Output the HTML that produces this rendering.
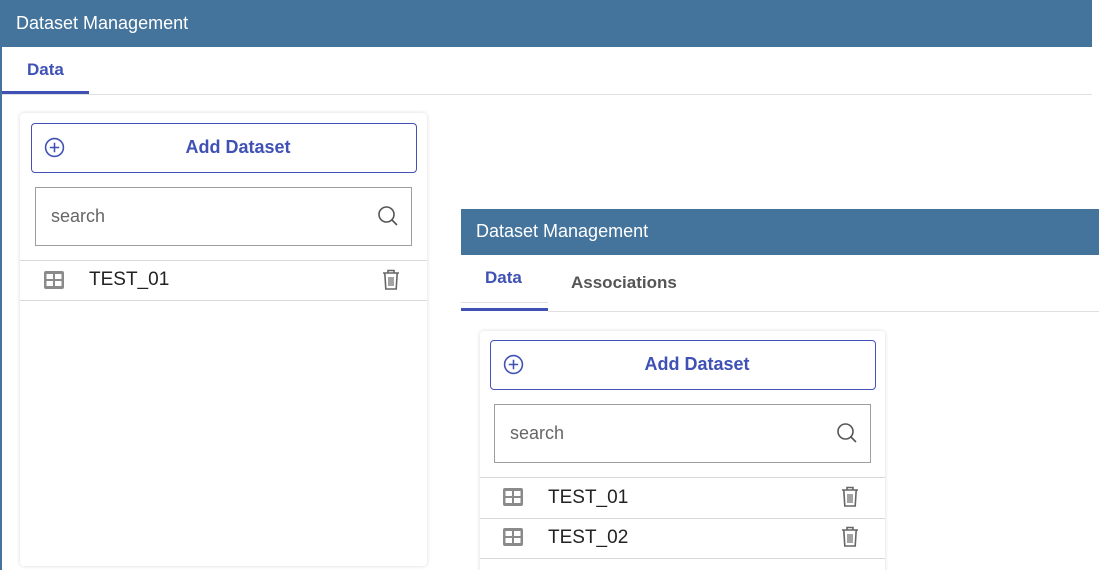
<!DOCTYPE html>
<html><head><meta charset="utf-8"><style>
*{box-sizing:border-box;margin:0;padding:0}
html,body{width:1099px;height:570px;overflow:hidden}
body{background:#fff;font-family:"Liberation Sans",sans-serif;position:relative}
.abs{position:absolute}
.hdr{background:#44749c;color:#fff;font-size:18px;line-height:46px;padding-left:16px}
.tab{color:#3f51b5;font-weight:bold;font-size:17px}
.card{background:#fff;box-shadow:0 0 4px rgba(0,0,0,.15);border-radius:4px}
.btn{border:1.5px solid #4452b8;border-radius:4px;color:#3f51b5;font-weight:bold;font-size:18px;text-align:center;padding-left:28px}
.search{border:1px solid #9e9e9e;color:#666;font-size:18px}
.line{height:1px;background:#d9d9d9}
.txt{font-size:19px;color:#222}
</style></head><body>
<div class="abs" style="left:0;top:0;width:2px;height:570px;background:#44749c"></div>
<div class="abs hdr" style="left:0;top:0;width:1092px;height:47px">Dataset Management</div>
<div class="abs tab" style="left:27px;top:60px">Data</div>
<div class="abs" style="left:2px;top:94px;width:1090px;height:1px;background:#e0e0e0"></div>
<div class="abs" style="left:2px;top:91px;width:87px;height:3px;background:#3f51b5"></div>

<div class="abs card" style="left:20px;top:113px;width:407px;height:453px"></div>
<div class="abs btn" style="left:31px;top:123px;width:386px;height:50px;line-height:47px">Add Dataset</div>
<svg class="abs" style="left:44px;top:137px" width="21" height="21" viewBox="0 0 20 20"><circle cx="10" cy="10" r="8.5" fill="none" stroke="#3f51b5" stroke-width="1.5"/><path d="M10 5.5v9M5.5 10h9" stroke="#3f51b5" stroke-width="1.5"/></svg>
<div class="abs search" style="left:35px;top:187px;width:377px;height:59px;line-height:57px;padding-left:15px">search</div>
<svg class="abs" style="left:377px;top:205px" width="22" height="22" viewBox="0 0 22 22"><circle cx="9.5" cy="9.5" r="7.5" fill="none" stroke="#555" stroke-width="1.6"/><path d="M15 15l5 5" stroke="#555" stroke-width="1.6"/></svg>
<div class="abs line" style="left:20px;top:260px;width:407px"></div>
<div class="abs line" style="left:20px;top:300px;width:407px"></div>
<svg class="abs" style="left:44px;top:271px" width="20" height="18" viewBox="0 0 20 18"><rect x="0" y="0" width="20" height="18" rx="2" fill="#8a8a8a"/><rect x="2.5" y="3" width="6.5" height="5" fill="#fff"/><rect x="11" y="3" width="6.5" height="5" fill="#fff"/><rect x="2.5" y="10" width="6.5" height="5" fill="#fff"/><rect x="11" y="10" width="6.5" height="5" fill="#fff"/></svg>
<div class="abs txt" style="left:89px;top:269px">TEST_01</div>
<svg class="abs" style="left:381px;top:269px" width="20" height="22" viewBox="0 0 20 22"><path d="M2 4h16M7 4V1.5h6V4M3.8 4l1 16h10.4l1-16" fill="none" stroke="#666" stroke-width="1.6"/><path d="M8 8v9M10 8v9M12 8v9" stroke="#666" stroke-width="1.2"/></svg>

<div class="abs" style="left:461px;top:209px;width:638px;height:361px;background:#fff"></div>
<div class="abs hdr" style="left:461px;top:209px;width:638px;height:46px;line-height:44px;padding-left:15px;font-size:18px">Dataset Management</div>
<div class="abs tab" style="left:485px;top:268px">Data</div>
<div class="abs" style="left:571px;top:273px;font-size:17px;font-weight:bold;color:#555">Associations</div>
<div class="abs" style="left:461px;top:302px;width:87px;height:1px;background:#e0e0e0"></div>
<div class="abs" style="left:548px;top:311px;width:551px;height:1px;background:#e0e0e0"></div>
<div class="abs" style="left:461px;top:308px;width:87px;height:3px;background:#3f51b5"></div>

<div class="abs card" style="left:480px;top:331px;width:405px;height:260px"></div>
<div class="abs btn" style="left:490px;top:340px;width:386px;height:50px;line-height:47px">Add Dataset</div>
<svg class="abs" style="left:503px;top:354px" width="21" height="21" viewBox="0 0 20 20"><circle cx="10" cy="10" r="8.5" fill="none" stroke="#3f51b5" stroke-width="1.5"/><path d="M10 5.5v9M5.5 10h9" stroke="#3f51b5" stroke-width="1.5"/></svg>
<div class="abs search" style="left:494px;top:404px;width:377px;height:59px;line-height:57px;padding-left:15px">search</div>
<svg class="abs" style="left:836px;top:422px" width="22" height="22" viewBox="0 0 22 22"><circle cx="9.5" cy="9.5" r="7.5" fill="none" stroke="#555" stroke-width="1.6"/><path d="M15 15l5 5" stroke="#555" stroke-width="1.6"/></svg>
<div class="abs line" style="left:480px;top:477px;width:405px"></div>
<div class="abs line" style="left:480px;top:518px;width:405px"></div>
<div class="abs line" style="left:480px;top:558px;width:405px"></div>
<svg class="abs" style="left:503px;top:488px" width="20" height="18" viewBox="0 0 20 18"><rect x="0" y="0" width="20" height="18" rx="2" fill="#8a8a8a"/><rect x="2.5" y="3" width="6.5" height="5" fill="#fff"/><rect x="11" y="3" width="6.5" height="5" fill="#fff"/><rect x="2.5" y="10" width="6.5" height="5" fill="#fff"/><rect x="11" y="10" width="6.5" height="5" fill="#fff"/></svg>
<div class="abs txt" style="left:548px;top:487px">TEST_01</div>
<svg class="abs" style="left:840px;top:486px" width="20" height="22" viewBox="0 0 20 22"><path d="M2 4h16M7 4V1.5h6V4M3.8 4l1 16h10.4l1-16" fill="none" stroke="#666" stroke-width="1.6"/><path d="M8 8v9M10 8v9M12 8v9" stroke="#666" stroke-width="1.2"/></svg>
<svg class="abs" style="left:503px;top:528px" width="20" height="18" viewBox="0 0 20 18"><rect x="0" y="0" width="20" height="18" rx="2" fill="#8a8a8a"/><rect x="2.5" y="3" width="6.5" height="5" fill="#fff"/><rect x="11" y="3" width="6.5" height="5" fill="#fff"/><rect x="2.5" y="10" width="6.5" height="5" fill="#fff"/><rect x="11" y="10" width="6.5" height="5" fill="#fff"/></svg>
<div class="abs txt" style="left:548px;top:527px">TEST_02</div>
<svg class="abs" style="left:840px;top:526px" width="20" height="22" viewBox="0 0 20 22"><path d="M2 4h16M7 4V1.5h6V4M3.8 4l1 16h10.4l1-16" fill="none" stroke="#666" stroke-width="1.6"/><path d="M8 8v9M10 8v9M12 8v9" stroke="#666" stroke-width="1.2"/></svg>
</body></html>
